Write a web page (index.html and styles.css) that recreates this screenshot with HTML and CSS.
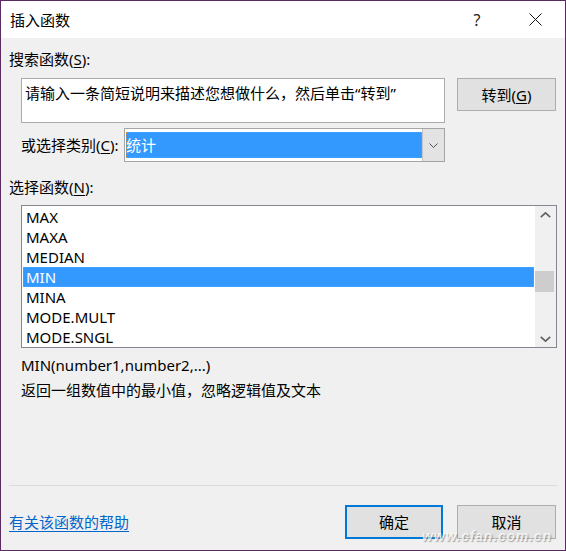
FILE: index.html
```html
<!DOCTYPE html>
<html lang="zh-CN">
<head>
    <meta charset="UTF-8">
    <meta name="viewport" content="width=device-width, initial-scale=1.0">
    <title>插入函数</title>
    <link rel="stylesheet" href="styles.css">
</head>
<body>
    <div class="window">
        <div class="titlebar">
            <span class="title">插入函数</span>
            <span class="ctrl help">?</span>
            <span class="ctrl close">
                <svg width="13" height="13" viewBox="0 0 13 13"><path d="M0.5 0.5 L12.5 12.5 M12.5 0.5 L0.5 12.5" stroke="#111" stroke-width="1" fill="none"/></svg>
            </span>
        </div>

        <div class="content">
            <div class="label first">搜索函数(<u>S</u>):</div>
            <div class="search-row">
                <div class="search-box">请输入一条简短说明来描述您想做什么，然后单击“转到”</div>
                <button class="btn go">转到(<u>G</u>)</button>
            </div>

            <div class="cat-row">
                <span class="cat-label">或选择类别(<u>C</u>):</span>
                <div class="combo">
                    <span class="combo-value">统计</span>
                    <span class="combo-arrow">
                        <svg width="9" height="5" viewBox="0 0 9 5"><path d="M0.5 0.5 L4.5 4.5 L8.5 0.5" stroke="#555" stroke-width="1" fill="none"/></svg>
                    </span>
                </div>
            </div>

            <div class="label pick">选择函数(<u>N</u>):</div>
            <div class="listbox">
                <ul class="items">
                    <li>MAX</li>
                    <li>MAXA</li>
                    <li>MEDIAN</li>
                    <li class="selected">MIN</li>
                    <li>MINA</li>
                    <li>MODE.MULT</li>
                    <li>MODE.SNGL</li>
                </ul>
                <div class="scrollbar">
                    <span class="sb-btn">
                        <svg width="11" height="6" viewBox="0 0 11 6"><path d="M0.8 5.2 L5.5 0.8 L10.2 5.2" stroke="#606060" stroke-width="1.6" fill="none"/></svg>
                    </span>
                    <div class="sb-track">
                        <div class="sb-thumb" style="margin-top: 48px;"></div>
                    </div>
                    <span class="sb-btn">
                        <svg width="11" height="6" viewBox="0 0 11 6"><path d="M0.8 0.8 L5.5 5.2 L10.2 0.8" stroke="#606060" stroke-width="1.6" fill="none"/></svg>
                    </span>
                </div>
            </div>

            <div class="syntax">MIN(number1,number2,...)</div>
            <div class="desc">返回一组数值中的最小值，忽略逻辑值及文本</div>

            <div class="footer">
                <a href="#" class="help-link">有关该函数的帮助</a>
                <button class="btn ok">确定</button>
                <button class="btn cancel">取消</button>
            </div>
        </div>

        <div class="watermark">www.cfan.com.cn</div>
    </div>
</body>
</html>
```

FILE: styles.css
```css
body {
    margin: 0;
    font-family: "Noto Sans", "Noto Sans CJK SC", sans-serif;
    font-size: 15px;
    color: #000;
    background-color: #f0f0f0;
}
.window {
    position: relative;
    width: 566px;
    height: 551px;
    box-sizing: border-box;
    border: 1px solid #5c2a63;
    display: flex;
    flex-direction: column;
    overflow: hidden;
}
.titlebar {
    height: 37px;
    background-color: #fff;
    display: flex;
    align-items: center;
    padding: 0 7px 0 9px;
    gap: 12px;
}
.title {
    flex: 1;
    line-height: 20px;
}
.ctrl {
    width: 46px;
    height: 37px;
    display: flex;
    align-items: center;
    justify-content: center;
    color: #222;
}
.help {
    font-size: 16px;
}
.content {
    flex: 1;
    background-color: #f0f0f0;
    padding: 0 8px;
    display: flex;
    flex-direction: column;
}
.label {
    line-height: 20px;
}
.label.first {
    margin-top: 11px;
}
.label.pick {
    margin-top: 15px;
}
u {
    text-decoration-thickness: 1px;
    text-underline-offset: 2px;
}
.search-row {
    margin-top: 9px;
    padding-left: 12px;
    display: flex;
    align-items: flex-start;
    gap: 12px;
}
.search-box {
    width: 424px;
    height: 45px;
    box-sizing: border-box;
    background-color: #fff;
    border: 1px solid #ababab;
    padding: 4px 3px;
    line-height: 20px;
}
.btn {
    font-family: inherit;
    font-size: 15px;
    color: #000;
    background-color: #e1e1e1;
    border: 1px solid #adadad;
    padding: 0;
    box-sizing: border-box;
    line-height: 20px;
}
.go {
    width: 99px;
    height: 33px;
}
.cat-row {
    margin-top: 5px;
    padding-left: 12px;
    display: flex;
    align-items: center;
}
.cat-label {
    width: 103px;
    line-height: 20px;
}
.combo {
    width: 321px;
    height: 34px;
    box-sizing: border-box;
    border: 1px solid #a5a5a5;
    background-color: #fff;
    padding: 3px 0 3px 1px;
    display: flex;
}
.combo-value {
    flex: 1;
    background-color: #3399ff;
    color: #fff;
    line-height: 26px;
    outline: 1px dotted #c98a4a;
    outline-offset: -1px;
}
.combo-arrow {
    width: 21px;
    margin: -3px 0;
    background-color: #e3e3e3;
    border-left: 1px solid #c4c4c4;
    display: flex;
    align-items: center;
    justify-content: center;
}
.listbox {
    margin: 8px 0 0 12px;
    height: 143px;
    box-sizing: border-box;
    border: 1px solid #828790;
    background-color: #fff;
    display: flex;
}
.items {
    flex: 1;
    list-style: none;
    margin: 0;
    padding: 1px;
}
.items li {
    height: 20px;
    line-height: 20px;
    padding-left: 3px;
}
.items li.selected {
    background-color: #3399ff;
    color: #fff;
    outline: 1px dotted #c98a4a;
    outline-offset: -1px;
}
.scrollbar {
    width: 21px;
    background-color: #f0f0f0;
    display: flex;
    flex-direction: column;
}
.sb-btn {
    height: 17px;
    display: flex;
    align-items: center;
    justify-content: center;
}
.sb-track {
    flex: 1;
}
.sb-thumb {
    width: 19px;
    height: 21px;
    background-color: #cdcdcd;
}
.syntax {
    margin-top: 7px;
    padding-left: 12px;
    line-height: 20px;
}
.desc {
    margin-top: 5px;
    padding-left: 12px;
    line-height: 20px;
}
.footer {
    margin-top: auto;
    border-top: 1px solid #dcdcdc;
    padding: 19px 1px 11px 0;
    display: flex;
    align-items: center;
}
.help-link {
    margin-right: auto;
    color: #0066cc;
    line-height: 20px;
    text-decoration-thickness: 1px;
    text-underline-offset: 3px;
}
.ok {
    width: 98px;
    height: 34px;
    line-height: 16px;
    border: 2px solid #0078d7;
}
.cancel {
    width: 99px;
    height: 34px;
    line-height: 16px;
    margin-left: 14px;
}
.watermark {
    position: absolute;
    left: 421px;
    top: 529px;
    font-family: "Liberation Sans", sans-serif;
    font-size: 14px;
    line-height: 12px;
    font-style: italic;
    font-weight: bold;
    letter-spacing: 0.8px;
    color: rgba(255, 255, 255, 0.75);
    text-shadow: 1px 1px 1px rgba(120, 120, 120, 0.6);
    pointer-events: none;
}
```
